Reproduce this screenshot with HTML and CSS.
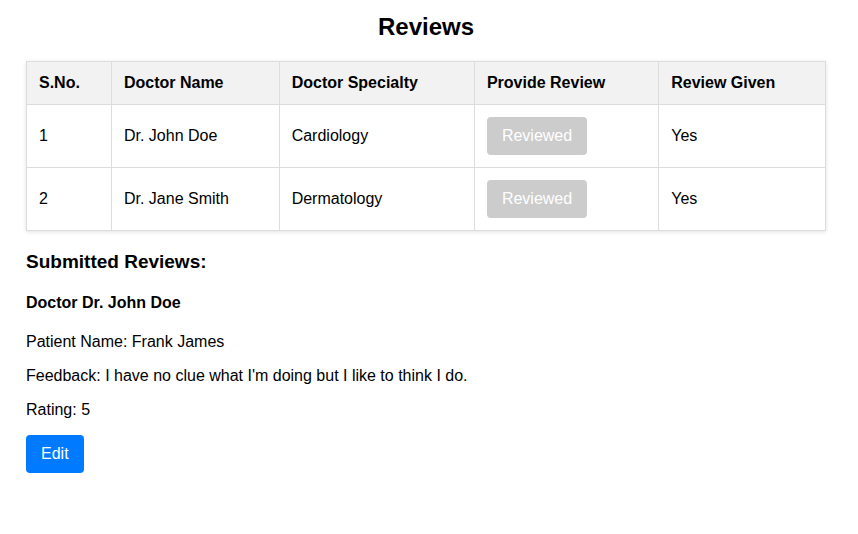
FILE: index.html
```html
<!DOCTYPE html>
<html>
<head>
<meta charset="utf-8">
<link rel="stylesheet" href="styles.css">
</head>
<body>
<div class="page">
  <h2 class="title">Reviews</h2>
  <table class="reviews">
    <colgroup>
      <col class="c1"><col class="c2"><col class="c3"><col class="c4"><col class="c5">
    </colgroup>
    <thead>
      <tr><th>S.No.</th><th>Doctor Name</th><th>Doctor Specialty</th><th>Provide Review</th><th>Review Given</th></tr>
    </thead>
    <tbody>
      <tr><td>1</td><td>Dr. John Doe</td><td>Cardiology</td><td><button class="btn btn-done">Reviewed</button></td><td>Yes</td></tr>
      <tr><td>2</td><td>Dr. Jane Smith</td><td>Dermatology</td><td><button class="btn btn-done">Reviewed</button></td><td>Yes</td></tr>
    </tbody>
  </table>
  <h3 class="sub">Submitted Reviews:</h3>
  <div class="review">
    <h4 class="doc">Doctor Dr. John Doe</h4>
    <p>Patient Name: Frank James</p>
    <p>Feedback: I have no clue what I'm doing but I like to think I do.</p>
    <p>Rating: 5</p>
    <button class="btn btn-edit">Edit</button>
  </div>
</div>
</body>
</html>
```
FILE: styles.css
```css
html, body { margin: 0; padding: 0; background: #fff; }
body { font-family: "Liberation Sans", Arial, sans-serif; color: #000; font-size: 16px; }
.page { width: 800px; padding: 0 26px; }
.title { font-size: 24px; text-align: center; margin: 13px 0 20px; line-height: 28px; }
.reviews { width: 800px; border-collapse: collapse; box-shadow: 0 1px 4px rgba(0,0,0,0.12); }
.c1 { width: 85px; } .c2 { width: 168px; } .c3 { width: 195.5px; } .c4 { width: 184.5px; } .c5 { width: 167px; }
.reviews th, .reviews td { border: 1px solid #ddd; padding: 12px; text-align: left; line-height: 18px; }
.reviews th { background: #f2f2f2; font-weight: bold; }
.btn { font-family: "Liberation Sans", Arial, sans-serif; font-size: 16px; line-height: 18px; padding: 10px 15px; border: none; border-radius: 4px; color: #fff; }
.btn-done { background: #ccc; }
.btn-edit { background: #007bff; }
.sub { font-size: 19px; margin: 20px 0 0; line-height: 22px; }
.doc { font-size: 16px; margin: 21px 0 0; line-height: 18px; }
.review p { margin: 21px 0 0; line-height: 18px; }
.review p + p { margin-top: 16px; }
.btn-edit { margin-top: 16px; }
```
